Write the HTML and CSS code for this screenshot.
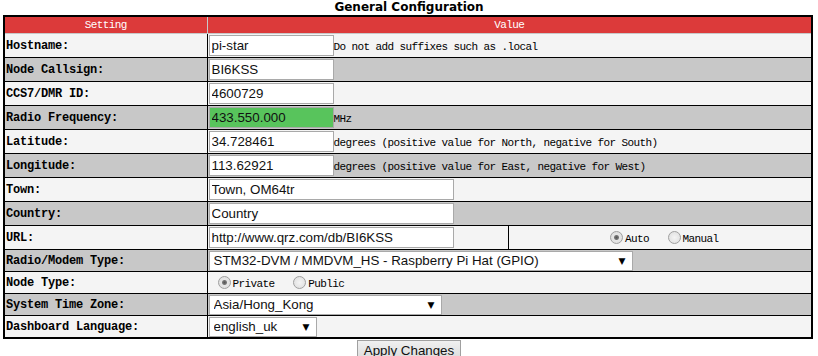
FILE: index.html
```html
<!DOCTYPE html>
<html lang="en">
<head>
    <meta charset="UTF-8">
    <meta name="viewport" content="width=device-width, initial-scale=1.0">
    <title>General Configuration</title>
    <link rel="stylesheet" href="styles.css">
</head>
<body>
    <div class="page">
        <h2 class="title">General Configuration</h2>
        <form id="config-form">
            <table class="config">
                <colgroup>
                    <col class="col-setting">
                    <col class="col-value">
                    <col class="col-extra">
                </colgroup>
                <tr class="head">
                    <th>Setting</th>
                    <th colspan="2">Value</th>
                </tr>
                <tr class="light">
                    <td class="label">Hostname:</td>
                    <td colspan="2"><input type="text" class="field short" name="confHostname" value="pi-star"><span class="note">Do not add suffixes such as .local</span></td>
                </tr>
                <tr class="dark">
                    <td class="label">Node Callsign:</td>
                    <td colspan="2"><input type="text" class="field short" name="confCallsign" value="BI6KSS"></td>
                </tr>
                <tr class="light">
                    <td class="label">CCS7/DMR ID:</td>
                    <td colspan="2"><input type="text" class="field short" name="dmrId" value="4600729"></td>
                </tr>
                <tr class="dark">
                    <td class="label">Radio Frequency:</td>
                    <td colspan="2"><input type="text" class="field short freq" name="confFREQ" value="433.550.000"><span class="note">MHz</span></td>
                </tr>
                <tr class="light">
                    <td class="label">Latitude:</td>
                    <td colspan="2"><input type="text" class="field short" name="confLatitude" value="34.728461"><span class="note">degrees (positive value for North, negative for South)</span></td>
                </tr>
                <tr class="dark">
                    <td class="label">Longitude:</td>
                    <td colspan="2"><input type="text" class="field short" name="confLongitude" value="113.62921"><span class="note">degrees (positive value for East, negative for West)</span></td>
                </tr>
                <tr class="light">
                    <td class="label">Town:</td>
                    <td colspan="2"><input type="text" class="field wide" name="confDesc1" value="Town, OM64tr"></td>
                </tr>
                <tr class="dark">
                    <td class="label">Country:</td>
                    <td colspan="2"><input type="text" class="field wide" name="confDesc2" value="Country"></td>
                </tr>
                <tr class="light">
                    <td class="label">URL:</td>
                    <td><input type="text" class="field wide" name="confURL" value="http://www.qrz.com/db/BI6KSS"></td>
                    <td class="center">
                        <label class="opt"><input type="radio" name="urlAuto" value="auto" checked>Auto</label>
                        <label class="opt"><input type="radio" name="urlAuto" value="man">Manual</label>
                    </td>
                </tr>
                <tr class="dark small">
                    <td class="label">Radio/Modem Type:</td>
                    <td colspan="2">
                        <span class="select-wrap modem">
                            <select name="confHardware">
                                <option>STM32-DVM / MMDVM_HS - Raspberry Pi Hat (GPIO)</option>
                            </select>
                        </span>
                    </td>
                </tr>
                <tr class="light small">
                    <td class="label">Node Type:</td>
                    <td colspan="2" class="radios">
                        <label class="opt"><input type="radio" name="nodeMode" value="prv" checked>Private</label>
                        <label class="opt"><input type="radio" name="nodeMode" value="pub">Public</label>
                    </td>
                </tr>
                <tr class="dark small">
                    <td class="label">System Time Zone:</td>
                    <td colspan="2">
                        <span class="select-wrap zone">
                            <select name="systemTimezone">
                                <option>Asia/Hong_Kong</option>
                            </select>
                        </span>
                    </td>
                </tr>
                <tr class="light small">
                    <td class="label">Dashboard Language:</td>
                    <td colspan="2">
                        <span class="select-wrap lang">
                            <select name="dashboardLanguage">
                                <option>english_uk</option>
                            </select>
                        </span>
                    </td>
                </tr>
            </table>
            <div class="actions">
                <button type="submit" class="btn">Apply Changes</button>
            </div>
        </form>
    </div>
</body>
</html>
```

FILE: styles.css
```css
body {
    margin: 0;
    padding: 0;
    background-color: #ffffff;
    color: #000000;
    font-family: "Liberation Mono", monospace;
}
.page {
    padding: 0 3px;
}
.title {
    margin: 0;
    font-family: "DejaVu Sans", sans-serif;
    font-size: 12px;
    font-weight: bold;
    line-height: 15px;
    text-align: center;
}
.config {
    width: 810px;
    border-collapse: collapse;
    border: 2px solid #000;
    table-layout: fixed;
}
.col-setting {
    width: 203px;
}
.col-value {
    width: 301px;
}
.config th {
    height: 16px;
    padding: 0;
    background-color: #dc3a3a;
    color: #fff;
    font-size: 11px;
    letter-spacing: -0.6px;
    font-weight: normal;
    border: 1px solid #c8c8c8;
}
.config td {
    height: 23px;
    padding: 0 1px;
    border: 1px solid #000;
    vertical-align: middle;
    white-space: nowrap;
}
.config tr.small td {
    height: 21px;
}
.light td {
    background-color: #f4f4f4;
}
.dark td {
    background-color: #c8c8c8;
}
.label {
    font-size: 12px;
    font-weight: bold;
    letter-spacing: -0.2px;
}
.note {
    font-size: 11px;
    letter-spacing: -0.6px;
}
.field {
    box-sizing: border-box;
    height: 21px;
    margin: 0;
    padding: 0 2px;
    border: 1px solid #a9a9a9;
    background: #fff;
    font-family: "Liberation Sans", Arial, sans-serif;
    font-size: 13.33px;
    color: #111;
    vertical-align: middle;
}
.field.short {
    width: 125px;
}
.field.wide {
    width: 245px;
}
.field.freq {
    background-color: #58c45c;
}
.center {
    text-align: center;
}
.opt {
    font-size: 11px;
    letter-spacing: -0.6px;
}
.opt input {
    appearance: none;
    box-sizing: border-box;
    width: 13px;
    height: 13px;
    margin: 0 2px 0 9px;
    border: 1px solid #a0a0a0;
    border-radius: 50%;
    background: radial-gradient(circle, #f4f4f4 0%, #dcdcdc 100%);
    vertical-align: -2px;
}
.opt input:checked {
    background: radial-gradient(circle, #555 0, #777 2px, #e6e6e6 3px, #dcdcdc 100%);
}
.select-wrap {
    position: relative;
    display: inline-block;
    vertical-align: middle;
}
.select-wrap select {
    appearance: none;
    box-sizing: border-box;
    width: 100%;
    height: 20px;
    margin: 0;
    padding: 0 16px 0 4px;
    border: 1px solid #a9a9a9;
    border-radius: 0;
    background: #fff;
    font-family: "Liberation Sans", Arial, sans-serif;
    font-size: 13.33px;
    color: #111;
}
.select-wrap::after {
    content: "\25BC";
    position: absolute;
    right: 7px;
    top: 4px;
    font-family: "DejaVu Sans", sans-serif;
    font-size: 9px;
    line-height: 12px;
    color: #000;
    pointer-events: none;
}
.select-wrap.modem {
    width: 424px;
}
.select-wrap.zone {
    width: 233px;
}
.select-wrap.lang {
    width: 108px;
}
.actions {
    text-align: center;
    padding-top: 1px;
}
.btn {
    height: 20px;
    padding: 0 6px;
    border: 1px solid #a0a0a0;
    background: linear-gradient(#f0f0f0, #dcdcdc);
    font-family: "Liberation Sans", Arial, sans-serif;
    font-size: 13.33px;
    color: #111;
}
```
